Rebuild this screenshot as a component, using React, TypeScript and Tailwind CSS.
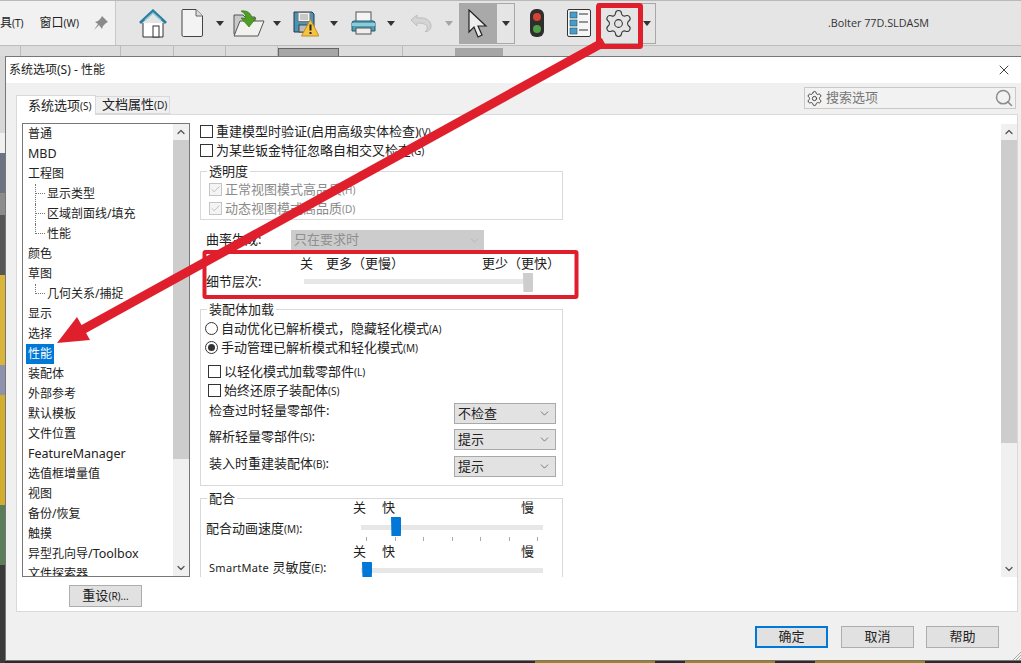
import { Check, ChevronDown, ChevronUp, Search, Settings, X } from "lucide-react";
import React from "react";

const Caret = ({ gray = false, cls = "" }: { gray?: boolean; cls?: string }) => (
  <svg width="8" height="5" viewBox="0 0 8 5" className={cls}>
    <path d="M0 0h8L4 5z" fill={gray ? "#a5a5a5" : "#333"} />
  </svg>
);

const Home = ({ cls }: { cls: string }) => (
  <svg width="28" height="29" viewBox="0 0 28 29" className={cls}>
    <path d="M4 14V28H24V14" fill="#fff" stroke="#333" />
    <rect x="14" y="17" width="6" height="11" fill="#fff" stroke="#333" />
    <path d="M1 14 14 2 27 14" fill="none" stroke="#2b7f9c" strokeWidth="3" />
    <path d="M6 11 14 4 22 11" fill="none" stroke="#8fc6d8" strokeWidth="1.5" />
  </svg>
);
const FileIcon = ({ cls }: { cls: string }) => (
  <svg width="22" height="28" viewBox="0 0 22 28" className={cls}>
    <path d="M1.5.5H15L21.5 7V26a1.5 1.5 0 0 1-1.5 1.5H2.500A1.500 1.500 0 0 1 1 26V1z" fill="#f3f3f3" stroke="#444" />
    <path d="M15 .5V7H21.500" fill="#ddd" stroke="#666" />
  </svg>
);
const OpenIcon = ({ cls }: { cls: string }) => (
  <svg width="32" height="27" viewBox="0 0 32 27" className={cls}>
    <path d="M1 5h9l2 2h10v17H1z" fill="#c9c9c9" stroke="#555" />
    <path d="M1 26 7 11h24l-6 15z" fill="#f1f1ee" stroke="#555" />
    <path d="M8 1c6-1 10 2 11 7h4l-7 9-8-9h5c0-3-2-5-5-7z" fill="#4d9e22" stroke="#2f6d10" strokeWidth=".6" />
  </svg>
);
const SaveIcon = ({ cls }: { cls: string }) => (
  <svg width="26" height="27" viewBox="0 0 26 27" className={cls}>
    <path d="M1 2h18l2 2v18H1z" fill="#4a94b8" stroke="#22394a" />
    <rect x="5" y="2.500" width="12" height="9" fill="#f2f2f2" stroke="#777" />
    <path d="M7 5h8M7 7h8M7 9h8" stroke="#888" strokeWidth=".8" />
    <rect x="6" y="15" width="9" height="7" fill="#bcbcbc" stroke="#444" />
    <path d="M17.500 9.500 26 26H8.500z" fill="#f6c443" stroke="#c08f1f" />
    <path d="M17.500 14.500v6M17.500 22v2" stroke="#222" strokeWidth="2" />
  </svg>
);
const PrinterIcon = ({ cls }: { cls: string }) => (
  <svg width="25" height="24" viewBox="0 0 25 24" className={cls}>
    <rect x="5" y="1" width="15" height="11" fill="#f4f4f4" stroke="#555" />
    <path d="M1 12a2 2 0 0 1 2-2h19a2 2 0 0 1 2 2v8H1z" fill="#4d9fb5" stroke="#26566a" />
    <rect x="1" y="12" width="23" height="3" fill="#8ccbd9" />
    <rect x="5" y="17" width="15" height="6" fill="#eee" stroke="#555" />
  </svg>
);
const UndoIcon = ({ cls }: { cls: string }) => (
  <svg width="22" height="18" viewBox="0 0 22 18" className={cls}>
    <path d="M1 6 7 1v3c8-1 14 2 14 8 0 2-1 4-3 5l-3 1c2-2 3-4 2-6-1-2-5-3-10-3v3z" fill="#d4d4d4" stroke="#bdbdbd" />
  </svg>
);
const PointerIcon = () => (
  <svg width="20" height="29" viewBox="0 0 20 29">
    <path d="M1 1v22l5-5 4 10 4-2-4-9h8z" fill="#eee" stroke="#222" strokeWidth="1.200" />
  </svg>
);
const LightIcon = ({ cls }: { cls: string }) => (
  <svg width="14" height="28" viewBox="0 0 14 28" className={cls}>
    <rect width="14" height="28" rx="6" fill="#2e2e2e" />
    <circle cx="7" cy="8" r="4" fill="#d8432f" />
    <circle cx="7" cy="20" r="4" fill="#4f9f45" />
  </svg>
);
const ListIcon = ({ cls }: { cls: string }) => (
  <svg width="24" height="28" viewBox="0 0 24 28" className={cls}>
    <rect x=".5" y=".5" width="23" height="27" rx="1.500" fill="#f6f6f6" stroke="#333" />
    {[3, 11, 19].map((y) => (
      <g key={y}>
        <rect x="3" y={y} width="7" height="6" fill="#4a9cc5" stroke="#20506a" strokeWidth=".6" />
        <path d={`M12 ${y + 2}h9`} stroke="#333" />
      </g>
    ))}
  </svg>
);

const Tag = ({ children }: { children: React.ReactNode }) => <span className="text-[10px]">{children}</span>;

const Box = ({ checked = false }: { checked?: boolean }) => (
  <span
    className={`flex h-[13px] w-[13px] shrink-0 items-center justify-center border ${
      checked ? "border-[#c4c4c4] bg-[#f4f4f4]" : "border-[#333] bg-white"
    }`}
  >
    {checked && <Check size={11} strokeWidth={1.5} color="#a8a8a8" />}
  </span>
);

const Radio = ({ on = false }: { on?: boolean }) => (
  <span className="flex h-[13px] w-[13px] shrink-0 items-center justify-center rounded-full border border-[#333] bg-white">
    {on && <span className="h-[7px] w-[7px] rounded-full bg-[#333]" />}
  </span>
);

const Legend = ({ children }: { children: React.ReactNode }) => (
  <span className="absolute -top-[9px] left-[6px] bg-white px-[2px] leading-[16px]">{children}</span>
);

const Thumb = ({ color, cls, h = 19 }: { color: string; cls: string; h?: number }) => (
  <svg width="11" height={h} viewBox={`0 0 11 ${h}`} className={`absolute ${cls}`}>
    <path d={`M1 0H10a1 1 0 0 1 1 1V${h - 5}L5.500 ${h}0 ${h - 5}V1a1 1 0 0 1 1-1z`} fill={color} />
  </svg>
);

const Pick = ({ text }: { text: string }) => (
  <div className="flex h-[21px] w-[102px] shrink-0 items-center justify-between border border-[#a9a9a9] bg-[#e2e2e2] pl-[3px] pr-[4px]">
    <span>{text}</span>
    <ChevronDown size={13} strokeWidth={1.2} color="#444" />
  </div>
);

type Row = { t: React.ReactNode; child?: "mid" | "last"; sel?: boolean };
const Lat = ({ children }: { children: React.ReactNode }) => <span className="text-[12.500px]">{children}</span>;
const rows: Row[] = [
  { t: "普通" },
  { t: <Lat>MBD</Lat> },
  { t: "工程图" },
  { t: "显示类型", child: "mid" },
  { t: "区域剖面线/填充", child: "mid" },
  { t: "性能", child: "last" },
  { t: "颜色" },
  { t: "草图" },
  { t: "几何关系/捕捉", child: "last" },
  { t: "显示" },
  { t: "选择" },
  { t: "性能", sel: true },
  { t: "装配体" },
  { t: "外部参考" },
  { t: "默认模板" },
  { t: "文件位置" },
  { t: <Lat>FeatureManager</Lat> },
  { t: "选值框增量值" },
  { t: "视图" },
  { t: "备份/恢复" },
  { t: "触摸" },
  { t: <>异型孔向导<Lat>/Toolbox</Lat></> },
  { t: "文件探索器" },
];

const TreeRow = ({ r }: { r: Row }) => {
  if (r.child) {
    return (
      <div className="flex h-[20px] items-center pl-[12px]">
        <div className={`w-[12px] self-start border-l border-dotted border-[#777] ${r.child === "mid" ? "h-[20px]" : "h-[10px]"}`}>
          <div className="h-[10px] w-[9px] border-b border-dotted border-[#777]" />
        </div>
        <span>{r.t}</span>
      </div>
    );
  }
  if (r.sel) {
    return (
      <div className="flex h-[20px] items-center pl-[3px]">
        <span className="flex h-[20px] items-center bg-[#0078d7] px-[2px] text-white">{r.t}</span>
      </div>
    );
  }
  return <div className="flex h-[20px] items-center pl-[5px]">{r.t}</div>;
};

const Scale = () => (
  <div className="flex h-[18px] items-center pl-[152px]">
    <span className="w-[29px]">关</span>
    <span className="w-[139px]">快</span>
    <span>慢</span>
  </div>
);

export default function App() {
  return (
    <div className="relative flex h-[663px] w-[1021px] flex-col overflow-hidden bg-[#777] font-['Noto_Sans','Noto_Sans_CJK_SC',sans-serif] text-[12px] text-[#222]">
      {/* top toolbar */}
      <div className="flex h-[46px] shrink-0 items-center border-t border-[#b9b9b9] border-b border-b-[#bdbdbd] bg-[#e5e5e5]">
        <div className="flex h-full w-[116px] shrink-0 items-center border-r border-[#c8c8c8] bg-[#f1f1f1]">
          <span>
            具<Tag>(T)</Tag>
          </span>
          <span className="ml-[16px]">
            窗口<Tag>(W)</Tag>
          </span>
          <svg width="14" height="14" viewBox="0 0 14 14" className="ml-[15px]">
            <path d="M8 0 14 6 12 7 9 10 8 13 5 9 0 14 4 8 1 6 4 5 7 2z" fill="#8a8a8a" />
          </svg>
        </div>
        <Home cls="ml-[23px]" />
        <FileIcon cls="ml-[14px]" />
        <Caret cls="ml-[13px]" />
        <OpenIcon cls="ml-[9px]" />
        <Caret cls="ml-[8px]" />
        <SaveIcon cls="ml-[12px]" />
        <Caret cls="ml-[11px]" />
        <PrinterIcon cls="ml-[13px]" />
        <Caret cls="ml-[11px]" />
        <UndoIcon cls="ml-[15px]" />
        <Caret gray cls="ml-[13px]" />
        <div className="ml-[6px] flex h-[41px] w-[38px] items-center justify-center bg-[#a9a9a9]">
          <PointerIcon />
        </div>
        <div className="flex h-[41px] w-[18px] items-center justify-center border border-l-0 border-[#a8a8a8]">
          <Caret />
        </div>
        <LightIcon cls="ml-[15px]" />
        <ListIcon cls="ml-[23px]" />
        <div className="ml-[6px] flex h-[41px] w-[59px] items-center border border-[#a8a8a8] pl-[5px]">
          <Settings size={31} strokeWidth={0.8} color="#333" />
          <Caret cls="ml-[9px]" />
        </div>
        <span className="ml-[172px] font-['Open_Sans',sans-serif] text-[10.800px] text-[#333]">.Bolter 77D.SLDASM</span>
      </div>

      {/* second toolbar, cut off by the dialog */}
      <div className="flex h-[10px] shrink-0 bg-[#dcdcdc]">
        <div className="h-full w-[21px] border-r border-[#bbb]" />
        <div className="h-full w-[100px] border-r border-[#bbb]" />
        <div className="h-full w-[53px] border-r border-[#bbb]" />
        <div className="h-full w-[52px] border-r border-[#bbb]" />
        <div className="h-full w-[52px] border-r border-[#bbb]" />
        <div className="mt-[2px] h-full w-[61px] border border-[#666] bg-[#a6a6a6]" />
        <div className="h-full w-[64px] border-r border-[#bbb]" />
        <div className="mt-[2px] ml-[52px] h-full w-[48px] bg-[#a6a6a6]" />
      </div>

      <div className="flex min-h-0 flex-1">
        {/* desktop sliver */}
        <div className="flex w-[5px] shrink-0 flex-col">
          <div className="h-[77px] bg-[#d8d8d8]" />
          <div className="h-[20px] bg-[#f0f0f0]" />
          <div className="h-[40px] bg-[#6d7383]" />
          <div className="h-[22px] bg-[#8c8c8c]" />
          <div className="h-[60px] bg-[#565656]" />
          <div className="h-[90px] bg-[#d9b53c]" />
          <div className="h-[30px] bg-[#8f92ad]" />
          <div className="h-[110px] bg-[#d2ae30]" />
          <div className="h-[60px] bg-[#5a7d5a]" />
          <div className="flex-1 bg-[#3a3a3a]" />
        </div>

        {/* dialog */}
        <div className="flex min-w-0 flex-1 flex-col">
          <div className="relative flex h-[605px] flex-col border border-r-0 border-[#777] bg-[#f0f0f0]">
            <div className="flex h-[26px] shrink-0 items-center justify-between bg-white pl-[3px] pr-[9px]">
              <span>系统选项(S) - 性能</span>
              <X size={16} strokeWidth={1.2} color="#111" />
            </div>

            <div className="flex h-[31px] shrink-0 items-end justify-between pl-[10px] pr-[5px] text-[13px]">
              <div className="flex items-end">
                <div className="relative top-[1px] flex h-[20px] w-[80px] items-center border border-b-0 border-[#d9d9d9] bg-white pl-[11px]">
                  <span className="whitespace-nowrap">
                    系统选项<Tag>(S)</Tag>
                  </span>
                </div>
                <div className="flex h-[18px] w-[74px] items-center border border-l-0 border-[#d9d9d9] bg-[#f0f0f0] pl-[6px]">
                  <span className="whitespace-nowrap">
                    文档属性<Tag>(D)</Tag>
                  </span>
                </div>
              </div>
              <div className="mb-[5px] flex h-[22px] w-[212px] items-center border border-[#c9c9c9] bg-[#f2f2f2] px-[1px] text-[#777]">
                <Settings size={17} strokeWidth={1.400} color="#444" />
                <span className="ml-[3px] flex-1">搜索选项</span>
                <Search size={20} strokeWidth={1.800} color="#8c8c8c" />
              </div>
            </div>

            {/* white panel */}
            <div className="ml-[10px] mr-[3px] flex h-[498px] shrink-0 border border-[#d9d9d9] bg-white">
              {/* left column */}
              <div className="ml-[5px] mt-[8px] flex w-[168px] shrink-0 flex-col">
                <div className="flex h-[454px] overflow-hidden border border-[#777] bg-white">
                  <div className="h-full flex-1 overflow-hidden">
                    {rows.map((r, i) => (
                      <TreeRow key={i} r={r} />
                    ))}
                  </div>
                  <div className="flex h-full w-[16px] shrink-0 flex-col bg-[#f0f0f0]">
                    <div className="flex h-[16px] items-center justify-center">
                      <ChevronUp size={12} strokeWidth={2.500} color="#555" />
                    </div>
                    <div className="h-[319px] bg-[#cdcdcd]" />
                    <div className="flex-1" />
                    <div className="flex h-[16px] items-center justify-center">
                      <ChevronDown size={12} strokeWidth={2.500} color="#555" />
                    </div>
                  </div>
                </div>
                <div className="ml-[47px] mt-[8px] flex h-[22px] w-[73px] items-center justify-center border border-[#adadad] bg-[#e1e1e1] text-[13px]">
                  <span>
                    重设<Tag>(R)...</Tag>
                  </span>
                </div>
              </div>

              {/* settings */}
              <div className="ml-[10px] mt-[7px] h-[455px] w-[363px] shrink-0 overflow-hidden text-[13px]">
                <div className="flex h-[19px] items-center gap-[3px]">
                  <Box />
                  <span>
                    重建模型时验证(启用高级实体检查)<Tag>(V)</Tag>
                  </span>
                </div>
                <div className="flex h-[19px] items-center gap-[3px]">
                  <Box />
                  <span>
                    为某些钣金特征忽略自相交叉检查<Tag>(G)</Tag>
                  </span>
                </div>

                <div className="relative mt-[11px] h-[49px] border border-[#d9d9d9] pt-[8px]">
                  <Legend>透明度</Legend>
                  <div className="flex h-[19px] items-center gap-[3px] pl-[8px] text-[#8a8a8a]">
                    <Box checked />
                    <span>
                      正常视图模式高品质<Tag>(H)</Tag>
                    </span>
                  </div>
                  <div className="flex h-[19px] items-center gap-[3px] pl-[8px] text-[#8a8a8a]">
                    <Box checked />
                    <span>
                      动态视图模式高品质<Tag>(D)</Tag>
                    </span>
                  </div>
                </div>

                <div className="mt-[10px] flex h-[20px] items-center pl-[6px]">
                  <span className="w-[85px]">曲率生成:</span>
                  <div className="flex h-[20px] w-[193px] items-center justify-between bg-[#cccccc] px-[3px] text-[#8f8f8f]">
                    <span>只在要求时</span>
                    <ChevronDown size={13} strokeWidth={1.200} color="#aaa" />
                  </div>
                </div>

                <div className="mt-[5px] flex h-[18px] items-center pl-[100px]">
                  <span className="w-[26px]">关</span>
                  <span className="w-[156px]">更多（更慢）</span>
                  <span>更少（更快）</span>
                </div>
                <div className="flex h-[18px] items-center pl-[6px]">
                  <span className="w-[98px]">细节层次:</span>
                  <div className="relative h-[18px] w-[229px]">
                    <div className="mt-[6px] h-[5px] w-full bg-[#e7e7e7]" />
                    <Thumb color="#cdcdcd" cls="top-0 right-0" />
                  </div>
                </div>

                <div className="relative mt-[18px] h-[177px] border border-[#d9d9d9] pt-[9px]">
                  <Legend>装配体加载</Legend>
                  <div className="flex h-[19px] items-center gap-[3px] pl-[4px]">
                    <Radio />
                    <span>
                      自动优化已解析模式，隐藏轻化模式<Tag>(A)</Tag>
                    </span>
                  </div>
                  <div className="flex h-[19px] items-center gap-[3px] pl-[4px]">
                    <Radio on />
                    <span>
                      手动管理已解析模式和轻化模式<Tag>(M)</Tag>
                    </span>
                  </div>
                  <div className="mt-[5px] flex h-[19px] items-center gap-[3px] pl-[7px]">
                    <Box />
                    <span>
                      以轻化模式加载零部件<Tag>(L)</Tag>
                    </span>
                  </div>
                  <div className="flex h-[19px] items-center gap-[3px] pl-[7px]">
                    <Box />
                    <span>
                      始终还原子装配体<Tag>(S)</Tag>
                    </span>
                  </div>
                  <div className="mt-[3px] flex h-[21px] items-center justify-between pl-[8px] pr-[6px]">
                    <span className="pb-[6px]">检查过时轻量零部件:</span>
                    <Pick text="不检查" />
                  </div>
                  <div className="mt-[5px] flex h-[21px] items-center justify-between pl-[8px] pr-[6px]">
                    <span className="pb-[5px]">
                      解析轻量零部件<Tag>(S)</Tag>:
                    </span>
                    <Pick text="提示" />
                  </div>
                  <div className="mt-[6px] flex h-[21px] items-center justify-between pl-[8px] pr-[6px]">
                    <span className="pb-[5px]">
                      装入时重建装配体<Tag>(B)</Tag>:
                    </span>
                    <Pick text="提示" />
                  </div>
                </div>

                <div className="relative mt-[12px] h-[79px] border border-b-0 border-[#d9d9d9]">
                  <Legend>配合</Legend>
                  <Scale />
                  <div className="flex h-[24px] items-center pl-[5px]">
                    <span className="w-[155px]">
                      配合动画速度<Tag>(M)</Tag>:
                    </span>
                    <div className="relative h-[24px] w-[182px]">
                      <div className="mt-[8px] h-[5px] w-full bg-[#e7e7e7]" />
                      <Thumb color="#0078d7" cls="top-0 left-[29px]" />
                      <div className="absolute left-[5px] top-[20px] flex w-[172px] justify-between">
                        {[0, 1, 2, 3, 4, 5, 6].map((i) => (
                          <div key={i} className="h-[4px] w-px bg-[#aaa]" />
                        ))}
                      </div>
                    </div>
                  </div>
                  <div className="mt-[2px]">
                    <Scale />
                  </div>
                  <div className="flex h-[16px] items-start pl-[8px]">
                    <span className="-mt-[2px] w-[152px] leading-[16px]">
                      <span className="text-[11px] tracking-[0.3px]">SmartMate</span> 灵敏度<Tag>(E)</Tag>:
                    </span>
                    <div className="relative h-[16px] w-[182px]">
                      <div className="mt-[7px] h-[5px] w-full bg-[#e7e7e7]" />
                      <Thumb color="#0078d7" cls="top-[1px] left-0" h={15} />
                    </div>
                  </div>
                </div>
              </div>

              <div className="flex-1" />
              {/* right scrollbar */}
              <div className="mb-[34px] mt-[9px] flex w-[16px] shrink-0 flex-col bg-[#f0f0f0]">
                <div className="flex h-[16px] items-center justify-center">
                  <ChevronUp size={12} strokeWidth={2.500} color="#555" />
                </div>
                <div className="h-[303px] bg-[#cdcdcd]" />
                <div className="flex-1" />
                <div className="flex h-[16px] items-center justify-center">
                  <ChevronDown size={12} strokeWidth={2.500} color="#555" />
                </div>
              </div>
            </div>

            {/* footer */}
            <div className="flex flex-1 justify-end pr-[22px] pt-[14px] text-[13px]">
              <div className="flex h-[22px] w-[73px] items-center justify-center border-2 border-[#0078d7] bg-[#e1e1e1]">确定</div>
              <div className="ml-[13px] flex h-[22px] w-[73px] items-center justify-center border border-[#adadad] bg-[#e1e1e1]">取消</div>
              <div className="ml-[12px] flex h-[22px] w-[73px] items-center justify-center border border-[#adadad] bg-[#e1e1e1]">帮助</div>
            </div>
            <svg width="8" height="8" viewBox="0 0 8 8" className="absolute bottom-0 right-0">
              <path d="M0 8 8 0M3 8l5-5M6 8l2-2" stroke="#aaa" />
            </svg>
          </div>
          {/* bottom strip of the picture behind */}
          <div className="flex h-[2px] bg-[#2a2a2a]">
            <div className="ml-[530px] h-full w-[120px] bg-[#9c8428]" />
            <div className="ml-[30px] h-full w-[90px] bg-[#9c8428]" />
            <div className="ml-[40px] h-full w-[110px] bg-[#9c8428]" />
          </div>
        </div>
      </div>

      {/* red annotations */}
      <svg width="1021" height="663" viewBox="0 0 1021 663" className="pointer-events-none absolute left-0 top-0">
        <rect x="598.500" y="5.500" width="42" height="41" rx="1" fill="none" stroke="#e01f2d" strokeWidth="5" />
        <rect x="204.500" y="252" width="372" height="45" rx="1" fill="none" stroke="#e01f2d" strokeWidth="4" />
        <path d="M604 42 82 330" stroke="#e01f2d" strokeWidth="9" />
        <path d="M57 343 77 317 90 340z" fill="#e01f2d" />
      </svg>
    </div>
  );
}
